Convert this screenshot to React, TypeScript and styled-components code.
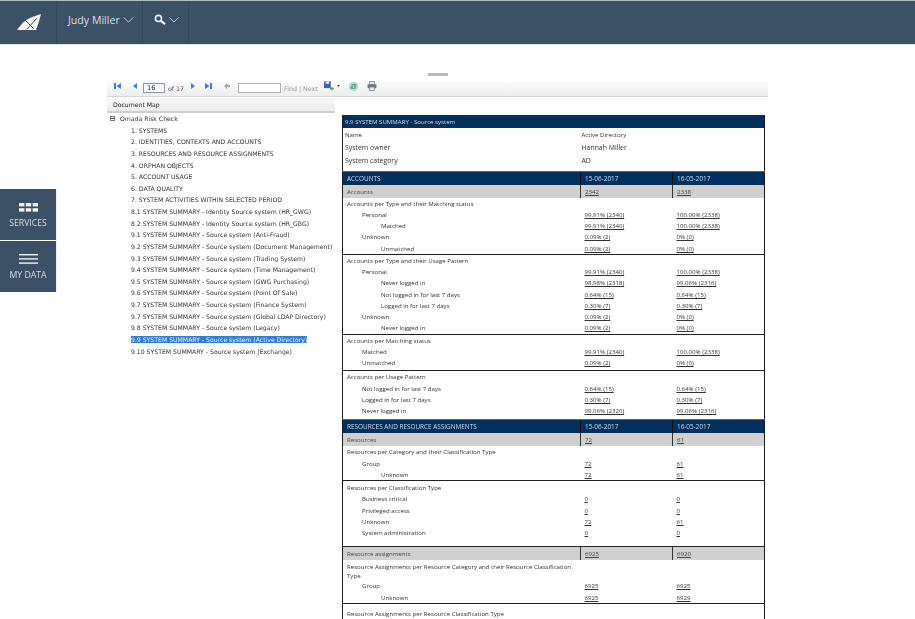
import React from 'react';
import styled, { createGlobalStyle } from 'styled-components';

const GlobalStyle = createGlobalStyle`
  html, body {
    margin: 0;
    padding: 0;
    height: 100%;
    overflow: hidden;
    background: #fff;
  }
`;

/* the reference is a scaled-down capture, so everything is slightly soft */
const Page = styled.div`
  position: relative;
  height: 619px;
  overflow: hidden;
  filter: blur(0.3px);
`;

const TopBar = styled.header`
  display: flex;
  height: 43px;
  background: #3d5166;
  border-top: 1px solid #b9bec3;
  border-bottom: 1px solid #e4e7ea;
`;

const BarCell = styled.div<{ $width: number; $left: number; $lift?: number }>`
  display: flex;
  align-items: center;
  gap: 3px;
  box-sizing: border-box;
  width: ${(props) => props.$width}px;
  height: 100%;
  padding-left: ${(props) => props.$left}px;
  padding-bottom: ${(props) => props.$lift ?? 0}px;
  border-right: 1px solid #34465a;
  color: #d8dde2;
  font-family: 'Open Sans', sans-serif;
  font-size: 10.6px;
`;

const SideMenu = styled.nav`
  position: absolute;
  top: 189px;
  left: 0;
  display: flex;
  flex-direction: column;
  gap: 1px;
  width: 56px;
  box-shadow: 1px 0 0 #eceef0;
`;

const SideButton = styled.div`
  display: flex;
  flex-direction: column;
  align-items: center;
  justify-content: center;
  gap: 5px;
  box-sizing: border-box;
  height: 51px;
  padding-top: 2px;
  background: #3d5166;
  color: #d8dde2;
  font-family: 'Open Sans', sans-serif;
  font-size: 8.7px;
`;

const Content = styled.main`
  display: flex;
  flex-direction: column;
  width: 661px;
  margin-left: 107px;
  padding-top: 28px;
`;

const Splitter = styled.div`
  align-self: flex-start;
  width: 20px;
  height: 3px;
  margin-left: 321px;
  background: #b7babd;
`;

const ToolBar = styled.div`
  display: flex;
  align-items: center;
  height: 15px;
  margin: 5px 0 1px;
  padding-left: 7px;
  background: linear-gradient(#fbfbfb, #eeeeee);
  border-bottom: 1px solid #d5d5d5;
  color: #555;
  font-family: 'DejaVu Sans', sans-serif;
  font-size: 6.3px;
`;

const PageInput = styled.div`
  box-sizing: border-box;
  width: 22px;
  height: 10px;
  margin: 0 3px 1px 6px;
  padding-left: 3px;
  border: 1px solid #8e979f;
  background: #fff;
  color: #222;
  font-size: 6.6px;
  line-height: 9px;
`;

const FindInput = styled.div`
  box-sizing: border-box;
  width: 43px;
  height: 10px;
  margin: 0 3px 1px 8px;
  border: 1px solid #a9b0b6;
  background: #fff;
`;

const ToolIcon = styled.svg<{ $left?: number }>`
  flex: none;
  margin-left: ${(props) => props.$left ?? 0}px;
  margin-bottom: 5px;
`;

const FindLabel = styled.span`
  color: #9a9a9a;
`;

const Split = styled.div`
  display: flex;
`;

const MapColumn = styled.aside`
  width: 228px;
  margin-right: 7px;
  font-family: 'DejaVu Sans', sans-serif;
  font-size: 6.15px;
  color: #333;
`;

const MapHeading = styled.div`
  box-sizing: border-box;
  height: 15px;
  padding: 3px 0 0 6px;
  background: linear-gradient(#f8f8f8, #ececec);
  border-bottom: 2px solid #cfcfcf;
  color: #222;
`;

const MapRoot = styled.div`
  display: flex;
  align-items: center;
  height: 11.4px;
  padding-left: 3px;
`;

const TreeToggle = styled.span`
  display: flex;
  align-items: center;
  justify-content: center;
  box-sizing: border-box;
  width: 5px;
  height: 5px;
  margin-right: 5px;
  border: 1px solid #777;
  &::before {
    content: '';
    width: 3px;
    height: 1px;
    background: #444;
  }
`;

const MapList = styled.ul`
  margin: 0;
  padding: 0 0 0 24px;
  list-style: none;
`;

const MapItem = styled.li<{ $selected?: boolean }>`
  display: flex;
  align-items: center;
  height: 11.63px;
  white-space: nowrap;
  span {
    background: ${(props) => (props.$selected ? '#2f7fd6' : 'transparent')};
    color: ${(props) => (props.$selected ? '#e6f0fa' : 'inherit')};
  }
`;

const Report = styled.table`
  table-layout: fixed;
  width: 422px;
  height: fit-content;
  margin-top: 17px;
  border-collapse: collapse;
  border-left: 1px solid #1a1a1a;
  border-right: 1px solid #1a1a1a;
  font-family: 'Open Sans', sans-serif;
  font-size: 6.1px;
  color: #333;
  col:nth-child(1) { width: 238px; }
  col:nth-child(2), col:nth-child(3) { width: 92px; }
`;

const TitleCell = styled.td`
  height: 13px;
  padding: 0 0 0 2px;
  background: #00305e;
  color: #d5dde6;
`;

const InfoRow = styled.tr<{ $large?: boolean }>`
  td {
    height: 13.2px;
    padding: 0 0 0 2px;
    color: #333;
    font-size: ${(props) => (props.$large ? '6.9px' : '6.1px')};
  }
  td:last-child { padding-left: 1px; }
`;

const InfoSpacer = styled.td`
  height: 3px;
  padding: 0;
  font-size: 0;
  line-height: 0;
`;

const HeadRow = styled.tr`
  td {
    height: 13px;
    padding: 0 0 0 4px;
    background: #00305e;
    color: #d5dde6;
    font-size: 6.4px;
    border-top: 1px solid #59636e;
    border-left: 1px solid #111;
  }
  td:first-child { border-left: 0; }
`;

const GrayRow = styled.tr`
  td {
    height: 13px;
    padding: 0 0 0 4px;
    background: #d0d0d0;
    color: #444;
    border-left: 1px solid #333;
  }
  td:first-child { border-left: 0; }
  td + td { text-decoration: underline; }
`;

const DataRow = styled.tr<{ $indent: number; $rule?: boolean; $top?: number; $bottom?: number }>`
  td {
    height: 11.25px;
    padding: ${(props) => `${props.$top ?? 0}px 0 ${props.$bottom ?? 0}px 4px`};
    line-height: 9px;
    border-bottom: ${(props) => (props.$rule ? '1px solid #222' : '0')};
  }
  td:first-child {
    padding-left: ${(props) => (props.$indent ? props.$indent * 19 : 4)}px;
  }
  td + td {
    text-decoration: underline;
  }
`;

type DataExtra = { rule?: boolean; top?: number; bottom?: number };

type Row =
  | { kind: 'head'; cells: [string, string, string] }
  | { kind: 'gray'; cells: [string, string, string] }
  | ({ kind: 'data'; indent: number; cells: [string, string?, string?] } & DataExtra);

const d = (indent: number, label: string, a?: string, b?: string, extra?: DataExtra): Row => ({
  kind: 'data',
  indent,
  cells: [label, a, b],
  ...extra,
});

const rows: Row[] = [
  { kind: 'head', cells: ['ACCOUNTS', '15-06-2017', '16-05-2017'] },
  { kind: 'gray', cells: ['Accounts', '2342', '2338'] },
  d(0, 'Accounts per Type and their Matching status'),
  d(1, 'Personal', '99.91% (2340)', '100.00% (2338)'),
  d(2, 'Matched', '99.91% (2340)', '100.00% (2338)'),
  d(1, 'Unknown', '0.09% (2)', '0% (0)'),
  d(2, 'Unmatched', '0.09% (2)', '0% (0)', { rule: true }),
  d(0, 'Accounts per Type and their Usage Pattern'),
  d(1, 'Personal', '99.91% (2340)', '100.00% (2338)'),
  d(2, 'Never logged in', '98.98% (2318)', '99.06% (2316)'),
  d(2, 'Not logged in for last 7 days', '0.64% (15)', '0.64% (15)'),
  d(2, 'Logged in for last 7 days', '0.30% (7)', '0.30% (7)'),
  d(1, 'Unknown', '0.09% (2)', '0% (0)'),
  d(2, 'Never logged in', '0.09% (2)', '0% (0)', { rule: true }),
  d(0, 'Accounts per Matching status'),
  d(1, 'Matched', '99.91% (2340)', '100.00% (2338)'),
  d(1, 'Unmatched', '0.09% (2)', '0% (0)', { rule: true, bottom: 2 }),
  d(0, 'Accounts per Usage Pattern'),
  d(1, 'Not logged in for last 7 days', '0.64% (15)', '0.64% (15)'),
  d(1, 'Logged in for last 7 days', '0.30% (7)', '0.30% (7)'),
  d(1, 'Never logged in', '99.06% (2320)', '99.06% (2316)', { bottom: 3 }),
  { kind: 'head', cells: ['RESOURCES AND RESOURCE ASSIGNMENTS', '15-06-2017', '16-05-2017'] },
  { kind: 'gray', cells: ['Resources', '72', '61'] },
  d(0, 'Resources per Category and their Classification Type'),
  d(1, 'Group', '72', '61'),
  d(2, 'Unknown', '72', '61', { rule: true }),
  d(0, 'Resources per Classification Type', undefined, undefined, { top: 1 }),
  d(1, 'Business critical', '0', '0'),
  d(1, 'Privileged access', '0', '0'),
  d(1, 'Unknown', '72', '61'),
  d(1, 'System administration', '0', '0', { rule: true, bottom: 8 }),
  { kind: 'gray', cells: ['Resource assignments', '6925', '6920'] },
  d(0, 'Resource Assignments per Resource Category and their Resource Classification Type', undefined, undefined, { top: 2 }),
  d(1, 'Group', '6925', '6925'),
  d(2, 'Unknown', '6925', '6929', { rule: true }),
  d(0, 'Resource Assignments per Resource Classification Type', undefined, undefined, { top: 4 }),
];

const mapItems = [
  '1. SYSTEMS',
  '2. IDENTITIES, CONTEXTS AND ACCOUNTS',
  '3. RESOURCES AND RESOURCE ASSIGNMENTS',
  '4. ORPHAN OBJECTS',
  '5. ACCOUNT USAGE',
  '6. DATA QUALITY',
  '7. SYSTEM ACTIVITIES WITHIN SELECTED PERIOD',
  '8.1 SYSTEM SUMMARY - Identity Source system (HR_GWG)',
  '8.2 SYSTEM SUMMARY - Identity Source system (HR_GBG)',
  '9.1 SYSTEM SUMMARY - Source system (Anti-Fraud)',
  '9.2 SYSTEM SUMMARY - Source system (Document Management)',
  '9.3 SYSTEM SUMMARY - Source system (Trading System)',
  '9.4 SYSTEM SUMMARY - Source system (Time Management)',
  '9.5 SYSTEM SUMMARY - Source system (GWG Purchasing)',
  '9.6 SYSTEM SUMMARY - Source system (Point Of Sale)',
  '9.7 SYSTEM SUMMARY - Source system (Finance System)',
  '9.7 SYSTEM SUMMARY - Source system (Global LDAP Directory)',
  '9.8 SYSTEM SUMMARY - Source system (Legacy)',
  '9.9 SYSTEM SUMMARY - Source system (Active Directory)',
  '9.10 SYSTEM SUMMARY - Source system (Exchange)',
];

const Chevron = ({ width = 11 }: { width?: number }) => (
  <svg width={width} height="6" viewBox="0 0 12 7" fill="none" stroke="#d8dde2" strokeWidth="1">
    <path d="M0.5 0.5 6 6 11.5 0.5" />
  </svg>
);

const App = () => {
  return (
    <Page>
      <GlobalStyle />
      <TopBar>
        <BarCell $width={57} $left={17}>
          <svg width="24" height="17" viewBox="0 0 24 17">
            <path d="M0 16 L5.5 9 Q10 5 14 3.5 Q19 1.5 24 0 L21.5 9 L19 16 Z" fill="#f4f5f6" />
            <path d="M8 6 L16.5 14.5 M19.7 4.3 L9.7 15.5" stroke="#3d5166" strokeWidth="1" fill="none" />
          </svg>
        </BarCell>
        <BarCell $width={86} $left={11} $lift={5}>
          Judy Miller
          <Chevron />
        </BarCell>
        <BarCell $width={46} $left={11} $lift={6}>
          <svg width="12" height="11" viewBox="0 0 13 12" fill="none" stroke="#f1f3f5">
            <circle cx="4.8" cy="4.8" r="3.3" strokeWidth="1.7" />
            <path d="M7.5 7.5 12 11" strokeWidth="2.2" />
          </svg>
          <Chevron width={10} />
        </BarCell>
      </TopBar>

      <SideMenu>
        <SideButton>
          <svg width="19" height="9" viewBox="0 0 19 9" fill="#eef0f2">
            <rect x="0" y="0" width="5.4" height="3.4" />
            <rect x="6.8" y="0" width="5.4" height="3.4" />
            <rect x="13.6" y="0" width="5.4" height="3.4" />
            <rect x="0" y="5.2" width="5.4" height="3.4" />
            <rect x="6.8" y="5.2" width="5.4" height="3.4" />
            <rect x="13.6" y="5.2" width="5.4" height="3.4" />
          </svg>
          SERVICES
        </SideButton>
        <SideButton>
          <svg width="19" height="10" viewBox="0 0 19 10" fill="#eef0f2">
            <rect x="0" y="0" width="19" height="1.4" />
            <rect x="0" y="4.2" width="19" height="1.4" />
            <rect x="0" y="8.4" width="19" height="1.4" />
          </svg>
          MY DATA
        </SideButton>
      </SideMenu>

      <Content>
        <Splitter />
        <ToolBar>
          <ToolIcon width="7" height="6" viewBox="0 0 7 7" fill="#3f7fd0" preserveAspectRatio="none">
            <rect x="0" y="0" width="2" height="7" />
            <path d="M7 0 V7 L2.5 3.5 Z" />
          </ToolIcon>
          <ToolIcon $left={12} width="4" height="6" viewBox="0 0 4 7" fill="#3f7fd0" preserveAspectRatio="none">
            <path d="M4 0 V7 L0 3.5 Z" />
          </ToolIcon>
          <PageInput>16</PageInput>
          <span>of 17</span>
          <ToolIcon $left={7} width="4" height="6" viewBox="0 0 4 7" fill="#3f7fd0" preserveAspectRatio="none">
            <path d="M0 0 V7 L4 3.5 Z" />
          </ToolIcon>
          <ToolIcon $left={10} width="7" height="6" viewBox="0 0 7 7" fill="#3f7fd0" preserveAspectRatio="none">
            <path d="M0 0 V7 L4.5 3.5 Z" />
            <rect x="5" y="0" width="2" height="7" />
          </ToolIcon>
          <ToolIcon $left={12} width="6" height="6" viewBox="0 0 6 6" fill="#a8a8a8">
            <path d="M0 3 L3 0 V1.8 H6 V4.2 H3 V6 Z" />
          </ToolIcon>
          <FindInput />
          <FindLabel>Find | Next</FindLabel>
          <ToolIcon $left={6} width="11" height="10" viewBox="0 0 13 11">
            <rect x="0" y="0" width="8" height="8" fill="#3b62b4" />
            <rect x="2" y="0" width="4" height="3" fill="#dfe6f4" />
            <path d="M7 8 H9 V6 L12 8.5 L9 11 V9.5 H7 Z" fill="#4ea84a" />
          </ToolIcon>
          <ToolIcon $left={2} width="3" height="2" viewBox="0 0 3 2" fill="#444">
            <path d="M0 0 H3 L1.5 2 Z" />
          </ToolIcon>
          <ToolIcon $left={9} width="9" height="9" viewBox="0 0 10 10">
            <circle cx="5" cy="5" r="4.5" fill="#b9d6ef" stroke="#8fb4d8" strokeWidth="0.6" />
            <path d="M2.5 4.5 A2.7 2.7 0 0 1 7 3 L8 2 V5 H5.2 L6.2 4 A1.5 1.5 0 0 0 3.8 4.6 Z" fill="#4fa33f" />
            <path d="M7.5 5.5 A2.7 2.7 0 0 1 3 7 L2 8 V5 H4.8 L3.8 6 A1.5 1.5 0 0 0 6.2 5.4 Z" fill="#4fa33f" />
          </ToolIcon>
          <ToolIcon $left={9} width="10" height="10" viewBox="0 0 10 10">
            <rect x="2.5" y="0.5" width="5" height="3" fill="#dfe3e7" stroke="#6d7782" strokeWidth="0.7" />
            <rect x="0.5" y="3.2" width="9" height="4" rx="0.8" fill="#6d7782" />
            <rect x="2.5" y="6" width="5" height="3.5" fill="#e5e7ea" stroke="#6d7782" strokeWidth="0.7" />
          </ToolIcon>
        </ToolBar>

        <Split>
          <MapColumn>
            <MapHeading>Document Map</MapHeading>
            <MapRoot>
              <TreeToggle />
              Omada Risk Check
            </MapRoot>
            <MapList>
              {mapItems.map((item, index) => (
                <MapItem key={item} $selected={index === 18}>
                  <span>{item}</span>
                </MapItem>
              ))}
            </MapList>
          </MapColumn>

          <Report>
            <colgroup>
              <col />
              <col />
              <col />
            </colgroup>
            <tbody>
              <tr>
                <TitleCell colSpan={3}>9.9 SYSTEM SUMMARY - Source system</TitleCell>
              </tr>
              <InfoRow>
                <td>Name</td>
                <td colSpan={2}>Active Directory</td>
              </InfoRow>
              <InfoRow $large>
                <td>System owner</td>
                <td colSpan={2}>Hannah Miller</td>
              </InfoRow>
              <InfoRow $large>
                <td>System category</td>
                <td colSpan={2}>AD</td>
              </InfoRow>
              <tr>
                <InfoSpacer colSpan={3} />
              </tr>
              {rows.map((row, index) => {
                const [label, a, b] = row.cells;
                if (row.kind === 'head') {
                  return (
                    <HeadRow key={index}>
                      <td>{label}</td>
                      <td>{a}</td>
                      <td>{b}</td>
                    </HeadRow>
                  );
                }
                if (row.kind === 'gray') {
                  return (
                    <GrayRow key={index}>
                      <td>{label}</td>
                      <td>{a}</td>
                      <td>{b}</td>
                    </GrayRow>
                  );
                }
                return (
                  <DataRow key={index} $indent={row.indent} $rule={row.rule} $top={row.top} $bottom={row.bottom}>
                    <td>{label}</td>
                    <td>{a}</td>
                    <td>{b}</td>
                  </DataRow>
                );
              })}
            </tbody>
          </Report>
        </Split>
      </Content>
    </Page>
  );
};

export default App;
